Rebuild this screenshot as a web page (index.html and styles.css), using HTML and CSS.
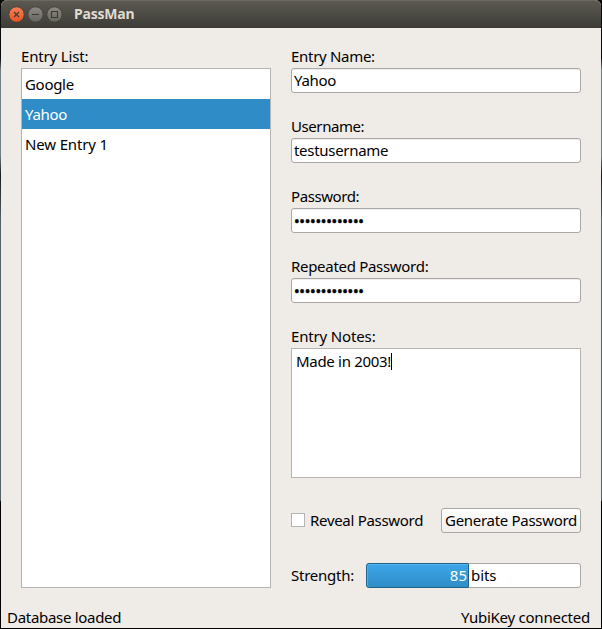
FILE: index.html
```html
<!DOCTYPE html>
<html lang="en">
<head>
<meta charset="utf-8">
<title>PassMan</title>
<link rel="stylesheet" href="styles.css">
</head>
<body>
<div class="window">
  <header class="titlebar">
    <svg class="controls" width="56" height="18" viewBox="0 0 56 18">
      <defs>
        <linearGradient id="close" x1="0" y1="0" x2="0" y2="1"><stop offset="0" stop-color="#f6815a"/><stop offset="1" stop-color="#e9541f"/></linearGradient>
        <linearGradient id="plain" x1="0" y1="0" x2="0" y2="1"><stop offset="0" stop-color="#8c8a82"/><stop offset="1" stop-color="#66645d"/></linearGradient>
      </defs>
      <g stroke="#3d3b35" stroke-width=".8">
        <circle cx="9.5" cy="8.5" r="7.7" fill="url(#close)"/>
        <circle cx="28.5" cy="8.5" r="7.7" fill="url(#plain)"/>
        <circle cx="47.5" cy="8.5" r="7.7" fill="url(#plain)"/>
      </g>
      <g fill="none" stroke="#3b3a34" stroke-width="1.1">
        <path d="M7 6l5 5M12 6l-5 5"/>
        <path d="M25 8.5h7"/>
        <path d="M44.5 5.5h6v6h-6z"/>
      </g>
    </svg>
    <h1 class="title">PassMan</h1>
  </header>
  <main class="content">
    <section class="column">
      <div class="label t-list">Entry List:</div>
      <ul class="list">
        <li class="item">Google</li>
        <li class="item selected">Yahoo</li>
        <li class="item t-list">New Entry 1</li>
      </ul>
    </section>
    <section class="column">
      <div class="label">Entry Name:</div>
      <div class="field">Yahoo</div>
      <div class="label t-user">Username:</div>
      <div class="field">testusername</div>
      <div class="label t-user">Password:</div>
      <div class="field dots">•••••••••••••</div>
      <div class="label">Repeated Password:</div>
      <div class="field dots">•••••••••••••</div>
      <div class="label t-list">Entry Notes:</div>
      <div class="notes"><span>Made in 2003!</span><i class="caret"></i></div>
      <div class="actions">
        <label class="reveal"><span class="box"></span><span>Reveal Password</span></label>
        <button class="button"><span>Generate Password</span></button>
      </div>
      <div class="strength">
        <span class="strength-label">Strength:</span>
        <div class="meter"><div class="fill">85</div><span class="unit">bits</span></div>
      </div>
    </section>
  </main>
  <footer class="status"><span>Database loaded</span><span class="t-yubi">YubiKey connected</span></footer>
</div>
</body>
</html>
```
FILE: styles.css
```css
* { box-sizing: border-box; }
body {
  margin: 0;
  width: 602px;
  height: 629px;
  padding: 0 1px 1px;
  overflow: hidden;
  background: linear-gradient(#090a0c 0 58px, #718087 70px 155px, #161b20 175px, #536169 220px 500px, #000 502px);
  font: 15px/20px "Noto Sans", sans-serif;
  letter-spacing: -.3px;
  color: #000;
}
.window {
  height: 628px;
  display: flex;
  flex-direction: column;
  background: #efebe7;
  border-radius: 6px 6px 0 0;
  overflow: hidden;
}
.titlebar {
  height: 28px;
  display: flex;
  align-items: center;
  padding-left: 6px;
  background: linear-gradient(#5b5951, #3d3c37);
  border-top: 1px solid #6a685f;
}
.controls { margin-top: 1px; }
.title { margin: -1px 0 0 11px; font-size: 14px; line-height: 20px; font-weight: 700; letter-spacing: -.2px; color: #dfdbd2; }
.content { height: 560px; display: flex; gap: 20px; padding: 20px 20px 0; }
.column { width: 250px; }
.column + .column { width: 290px; }
.label { height: 20px; line-height: 17px; white-space: nowrap; }
.t-list { letter-spacing: -.15px; }
.t-user { letter-spacing: -.42px; }
.t-yubi { letter-spacing: -.24px; }
.list { height: 520px; margin: 0; padding: 0; list-style: none; background: #fff; border: 1px solid #b6b3b0; }
.item { height: 30px; padding-left: 3px; line-height: 30px; }
.selected { background: #308cc6; color: #fff; }
.field {
  height: 25px;
  margin-bottom: 25px;
  padding-left: 2px;
  line-height: 23px;
  background: #fff;
  border: 1px solid #aaa7a4;
  border-radius: 3px;
  box-shadow: inset 0 1px #eee;
}
.dots { -webkit-text-stroke: .5px #000; letter-spacing: -.28px; line-height: 25px; }
.notes { height: 130px; padding: 4px; display: flex; background: #fff; border: 1px solid #b6b3b0; line-height: 16px; }
.caret { width: 1px; height: 17px; background: #000; }
.actions { height: 25px; margin-top: 30px; display: flex; justify-content: space-between; }
.reveal { display: flex; align-items: center; height: 23px; white-space: nowrap; }
.box { width: 14px; height: 14px; margin: 1px 5px 0 0; background: #fff; border: 1px solid #b6b3b0; }
.button {
  width: 140px;
  padding: 0 0 2px;
  display: flex;
  align-items: center;
  justify-content: center;
  font: inherit;
  letter-spacing: inherit;
  color: #000;
  white-space: nowrap;
  background: linear-gradient(#fff, #f1eeeb);
  border: 1px solid #aaa7a4;
  border-radius: 3px;
}
.strength { height: 25px; margin-top: 30px; display: flex; justify-content: space-between; }
.strength-label { line-height: 25px; letter-spacing: -.25px; }
.meter { width: 215px; height: 25px; display: flex; background: #fff; border: 1px solid #aaa7a4; border-radius: 3px; line-height: 23px; }
.fill {
  width: 103px;
  height: 25px;
  margin: -1px 0 0 -1px;
  padding-right: 1px;
  text-align: right;
  letter-spacing: 0;
  color: #fff;
  background: linear-gradient(#3da7e9, #308cc6);
  border: 1px solid #21628b;
  border-radius: 3px 1px 1px 3px;
  box-shadow: inset 0 1px #58b4ed, inset 1px 0 #58aee0;
}
.unit { margin-left: 2px; letter-spacing: -.1px; }
.status { height: 20px; margin-top: 20px; padding: 0 11px 0 6px; display: flex; justify-content: space-between; line-height: 19px; }
```
